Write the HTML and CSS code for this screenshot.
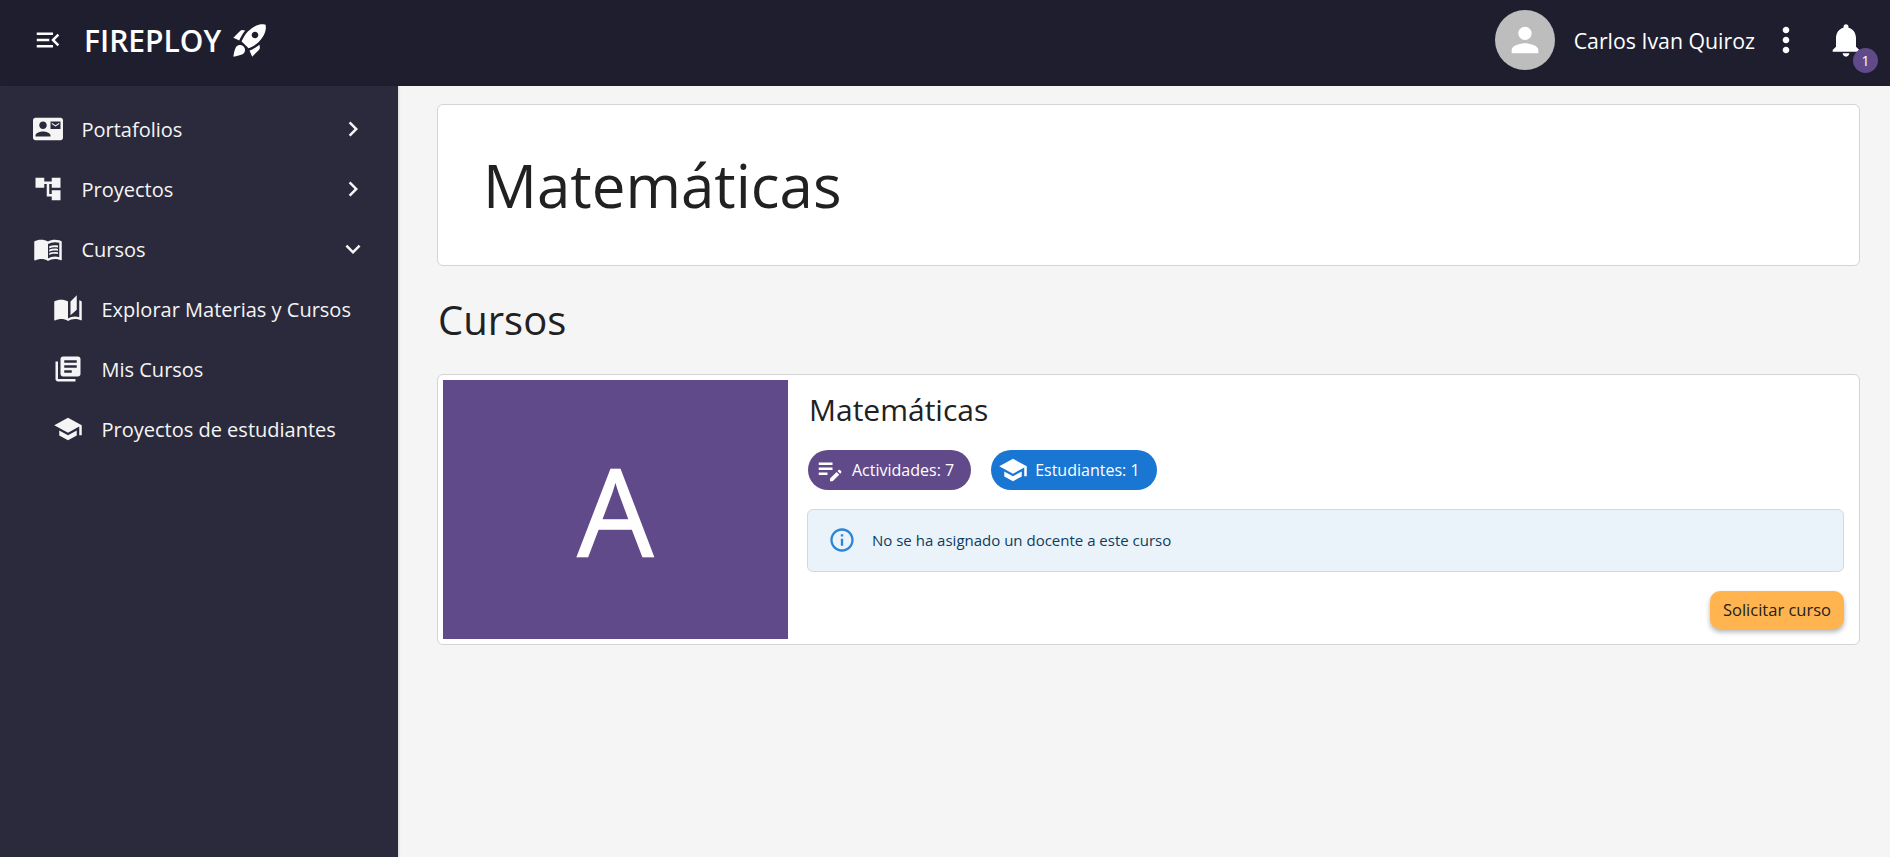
FILE: index.html
```html
<!DOCTYPE html>
<html lang="es">
<head>
  <meta charset="UTF-8" />
  <meta name="viewport" content="width=device-width, initial-scale=1.0"/>
  <title>Fireploy - Matemáticas</title>
  <link rel="stylesheet" href="styles.css">
</head>
<body>
  <header class="topbar">
    <div class="brand">
      <svg class="icon-menu" viewBox="0 0 24 24"><path d="M3 18h13v-2H3v2zm0-5h10v-2H3v2zm0-7v2h13V6H3zm18 9.59L17.42 12 21 8.41 19.59 7l-5 5 5 5L21 15.59z"/></svg>
      <span class="brand-name">FIREPLOY</span>
      <svg class="icon-rocket" viewBox="0 0 24 24"><path d="M9.19 6.35c-2.04 2.29-3.44 5.58-3.57 5.89L2 10.69l4.05-4.05c.47-.47 1.15-.68 1.81-.55l1.33.26zM11.17 17s3.74-1.55 5.89-3.7c5.4-5.4 4.5-9.62 4.21-10.57-.95-.3-5.17-1.19-10.57 4.21C8.55 9.09 7 12.83 7 12.83L11.17 17zm6.48-2.19c-2.29 2.04-5.58 3.44-5.89 3.57L13.31 22l4.05-4.05c.47-.47.68-1.15.55-1.81l-.26-1.33zM9 18c0 .83-.34 1.58-.88 2.12C6.94 21.3 2 22 2 22s.7-4.94 1.88-6.12C4.42 15.34 5.17 15 6 15c1.66 0 3 1.34 3 3zm4-9c0-1.1.9-2 2-2s2 .9 2 2-.9 2-2 2-2-.9-2-2z"/></svg>
    </div>
    <div class="user-area">
      <div class="avatar">
        <svg viewBox="0 0 24 24"><path d="M12 12c2.21 0 4-1.79 4-4s-1.79-4-4-4-4 1.79-4 4 1.79 4 4 4zm0 2c-2.67 0-8 1.34-8 4v2h16v-2c0-2.66-5.33-4-8-4z"/></svg>
      </div>
      <span class="user-name">Carlos Ivan Quiroz</span>
      <svg class="icon-top" viewBox="0 0 24 24"><path d="M12 8c1.1 0 2-.9 2-2s-.9-2-2-2-2 .9-2 2 .9 2 2 2zm0 2c-1.1 0-2 .9-2 2s.9 2 2 2 2-.9 2-2-.9-2-2-2zm0 6c-1.1 0-2 .9-2 2s.9 2 2 2 2-.9 2-2-.9-2-2-2z"/></svg>
      <div class="bell">
        <svg class="icon-top" viewBox="0 0 24 24"><path d="M12 22c1.1 0 2-.9 2-2h-4c0 1.1.89 2 2 2zm6-6v-5c0-3.07-1.64-5.64-4.5-6.32V4c0-.83-.67-1.5-1.5-1.5s-1.5.67-1.5 1.5v.68C7.63 5.36 6 7.92 6 11v5l-2 2v1h16v-1l-2-2z"/></svg>
        <span class="badge">1</span>
      </div>
    </div>
  </header>

  <div class="layout">
    <nav class="sidebar">
      <a class="nav-item">
        <svg class="nav-icon" viewBox="0 0 24 24"><path d="M21 8V7l-3 2-3-2v1l3 2 3-2zm1-5H2C.9 3 0 3.9 0 5v14c0 1.1.9 2 2 2h20c1.1 0 1.99-.9 1.99-2L24 5c0-1.1-.9-2-2-2zM8 6c1.66 0 3 1.34 3 3s-1.34 3-3 3-3-1.34-3-3 1.34-3 3-3zm6 12H2v-1c0-2 4-3.1 6-3.1s6 1.1 6 3.1v1zm8-6h-8V6h8v6z"/></svg>
        <span class="nav-label">Portafolios</span>
        <svg class="nav-icon" viewBox="0 0 24 24"><path d="M10 6 8.59 7.41 13.17 12l-4.58 4.59L10 18l6-6z"/></svg>
      </a>
      <a class="nav-item">
        <svg class="nav-icon" viewBox="0 0 24 24"><path d="M22 11V3h-7v3H9V3H2v8h7V8h2v10h4v3h7v-8h-7v3h-2V8h2v3z"/></svg>
        <span class="nav-label">Proyectos</span>
        <svg class="nav-icon" viewBox="0 0 24 24"><path d="M10 6 8.59 7.41 13.17 12l-4.58 4.59L10 18l6-6z"/></svg>
      </a>
      <a class="nav-item">
        <svg class="nav-icon" viewBox="0 0 24 24"><path d="M21 5c-1.11-.35-2.33-.5-3.5-.5-1.95 0-4.05.4-5.5 1.5-1.45-1.1-3.55-1.5-5.5-1.5S2.45 4.9 1 6v14.65c0 .25.25.5.5.5.1 0 .15-.05.25-.05C3.1 20.45 5.05 20 6.5 20c1.95 0 4.05.4 5.5 1.5 1.35-.85 3.8-1.5 5.5-1.5 1.65 0 3.35.3 4.75 1.05.1.05.15.05.25.05.25 0 .5-.25.5-.5V6c-.6-.45-1.25-.75-2-1zm0 13.5c-1.1-.35-2.3-.5-3.5-.5-1.7 0-4.15.65-5.5 1.5V8c1.35-.85 3.8-1.5 5.5-1.5 1.2 0 2.4.15 3.5.5v11.5z"/><path d="M17.5 10.5c.88 0 1.73.09 2.5.26V9.24c-.79-.15-1.64-.24-2.5-.24-1.7 0-3.24.29-4.5.83v1.66c1.13-.64 2.7-.99 4.5-.99zM13 12.49v1.66c1.13-.64 2.7-.99 4.5-.99.88 0 1.73.09 2.5.26V11.9c-.79-.15-1.64-.24-2.5-.24-1.7 0-3.24.3-4.5.83zM17.5 14.33c-1.7 0-3.24.29-4.5.83v1.66c1.13-.64 2.7-.99 4.5-.99.88 0 1.73.09 2.5.26v-1.52c-.79-.16-1.64-.24-2.5-.24z"/></svg>
        <span class="nav-label">Cursos</span>
        <svg class="nav-icon" viewBox="0 0 24 24"><path d="M16.59 8.59 12 13.17 7.41 8.59 6 10l6 6 6-6z"/></svg>
      </a>
      <a class="nav-item nav-sub">
        <svg class="nav-icon" viewBox="0 0 24 24"><path d="M19 1l-5 5v11l5-4.5V1zM1 6v14.65c0 .25.25.5.5.5.1 0 .15-.05.25-.05C3.1 20.45 5.05 20 6.5 20c1.95 0 4.05.4 5.5 1.5V6c-1.45-1.1-3.55-1.5-5.5-1.5S2.45 4.9 1 6zm22 13.5V6c-.6-.45-1.25-.75-2-1v13.5c-1.1-.35-2.3-.5-3.5-.5-1.7 0-4.15.65-5.5 1.5v2c1.35-.85 3.8-1.5 5.5-1.5 1.65 0 3.35.3 4.75 1.05.1.05.15.05.25.05.25 0 .5-.25.5-.5v-1.1z"/></svg>
        <span class="nav-label">Explorar Materias y Cursos</span>
      </a>
      <a class="nav-item nav-sub">
        <svg class="nav-icon" viewBox="0 0 24 24"><path d="M4 6H2v14c0 1.1.9 2 2 2h14v-2H4V6zm16-4H8c-1.1 0-2 .9-2 2v12c0 1.1.9 2 2 2h12c1.1 0 2-.9 2-2V4c0-1.1-.9-2-2-2zm-1 9H9V9h10v2zm-4 4H9v-2h6v2zm4-8H9V5h10v2z"/></svg>
        <span class="nav-label">Mis Cursos</span>
      </a>
      <a class="nav-item nav-sub">
        <svg class="nav-icon" viewBox="0 0 24 24"><path d="M5 13.18v4L12 21l7-3.82v-4L12 17l-7-3.82zM12 3L1 9l11 6 9-4.91V17h2V9L12 3z"/></svg>
        <span class="nav-label">Proyectos de estudiantes</span>
      </a>
    </nav>

    <main class="content">
      <section class="panel page-title">
        <h1>Matemáticas</h1>
      </section>

      <h2 class="section-title">Cursos</h2>

      <article class="panel course">
        <div class="course-cover">A</div>
        <div class="course-body">
          <h3>Matemáticas</h3>
          <div class="chips">
            <span class="chip chip-purple">
              <svg viewBox="0 0 24 24"><path d="M3 10h11v2H3zm0-2h11V6H3zm0 8h7v-2H3zm15.01-3.13l.71-.71c.39-.39 1.02-.39 1.41 0l.71.71c.39.39.39 1.02 0 1.41l-.71.71-2.12-2.12zm-.71.71l-5.3 5.3V21h2.12l5.3-5.3-2.12-2.12z"/></svg>
              Actividades: 7
            </span>
            <span class="chip chip-blue">
              <svg viewBox="0 0 24 24"><path d="M5 13.18v4L12 21l7-3.82v-4L12 17l-7-3.82zM12 3L1 9l11 6 9-4.91V17h2V9L12 3z"/></svg>
              Estudiantes: 1
            </span>
          </div>
          <div class="alert">
            <svg viewBox="0 0 24 24"><path d="M11 7h2v2h-2zm0 4h2v6h-2zm1-9C6.48 2 2 6.48 2 12s4.48 10 10 10 10-4.48 10-10S17.52 2 12 2zm0 18c-4.41 0-8-3.59-8-8s3.59-8 8-8 8 3.59 8 8-3.59 8-8 8z"/></svg>
            <span>No se ha asignado un docente a este curso</span>
          </div>
          <div class="course-actions">
            <button class="btn-request">Solicitar curso</button>
          </div>
        </div>
      </article>
    </main>
  </div>
</body>
</html>
```

FILE: styles.css
```css
/* Base */
* {
  box-sizing: border-box;
  margin: 0;
  padding: 0;
}

html, body {
  height: 100%;
  overflow: hidden;
}

body {
  font-family: 'Open Sans', sans-serif;
  background-color: #f5f5f5;
  color: #212121;
  display: flex;
  flex-direction: column;
}

svg {
  fill: currentColor;
  flex-shrink: 0;
  display: block;
}

/* Top bar */
.topbar {
  height: 86px;
  flex-shrink: 0;
  background-color: #1e1e2f;
  color: #fff;
  display: flex;
  align-items: center;
  justify-content: space-between;
  padding: 0 10px 6px 33px;
}

.brand {
  display: flex;
  align-items: center;
}

.icon-menu {
  width: 30px;
  height: 30px;
}

.brand-name {
  font-size: 30px;
  font-weight: 600;
  margin-left: 21px;
  margin-right: 9px;
}

.icon-rocket {
  width: 40px;
  height: 40px;
}

.user-area {
  display: flex;
  align-items: center;
}

.avatar {
  width: 60px;
  height: 60px;
  border-radius: 50%;
  background-color: #bdbdbd;
  margin-right: 19px;
  display: flex;
  align-items: center;
  justify-content: center;
}

.avatar svg {
  width: 40px;
  height: 40px;
}

.user-name {
  font-size: 21.3px;
  margin-right: 11px;
}

.icon-top {
  width: 40px;
  height: 40px;
}

.bell {
  position: relative;
  margin-left: 20px;
  margin-right: 14px;
}

.badge {
  position: absolute;
  left: 27px;
  top: 28px;
  width: 25px;
  height: 25px;
  border-radius: 50%;
  background-color: #614a8a;
  font-size: 14px;
  display: flex;
  align-items: center;
  justify-content: center;
}

/* Sidebar */
.layout {
  flex: 1;
  display: flex;
  min-height: 0;
}

.sidebar {
  width: 398px;
  flex-shrink: 0;
  background-color: #2b2a3c;
  color: #f5f5f5;
  padding-top: 13px;
  box-shadow: 1px 0 2px rgba(0, 0, 0, 0.12);
}

.nav-item {
  height: 60px;
  display: flex;
  align-items: center;
  padding: 0 30px 0 33px;
}

.nav-sub {
  padding-left: 53px;
}

.nav-icon {
  width: 30px;
  height: 30px;
}

.nav-label {
  font-size: 20px;
  margin-left: 18.5px;
  flex: 1;
}

/* Content */
.content {
  flex: 1;
  padding: 18px 30px 0 39px;
}

.panel {
  background-color: #fff;
  border: 1px solid #d4d4d4;
  border-radius: 6px;
}

.page-title {
  height: 162px;
  display: flex;
  align-items: center;
  padding-left: 45px;
}

.page-title h1 {
  font-size: 60px;
  font-weight: 400;
}

.section-title {
  font-size: 40px;
  font-weight: 400;
  line-height: 54px;
  margin: 27px 0 27px 1px;
}

/* Course card */
.course {
  height: 271px;
  padding: 5px;
  display: flex;
}

.course-cover {
  width: 345px;
  background-color: #614a8a;
  color: #fff;
  font-size: 120px;
  -webkit-text-stroke: 1.5px #fff;
  display: flex;
  align-items: center;
  justify-content: center;
}

.course-body {
  flex: 1;
  padding-left: 20px;
  padding-right: 10px;
}

.course-body h3 {
  font-size: 30px;
  font-weight: 400;
  line-height: 40px;
  margin: 10px 0 20px 1px;
}

.chips {
  display: flex;
  gap: 20px;
}

.chip {
  height: 40px;
  border-radius: 20px;
  color: #fff;
  font-size: 16px;
  display: flex;
  align-items: center;
  gap: 7px;
  padding: 0 17px 0 7px;
}

.chip svg {
  width: 30px;
  height: 30px;
}

.chip-purple {
  background-color: #614a8a;
}

.chip-blue {
  background-color: #1976d2;
}

.alert {
  height: 63px;
  margin: 19px 0 0 -1px;
  background-color: #ebf3fa;
  border: 1px solid #d4d8dc;
  border-radius: 6px;
  color: #0d3c61;
  font-size: 15px;
  display: flex;
  align-items: center;
  gap: 16px;
  padding: 0 0 1px 20px;
}

.alert svg {
  width: 28px;
  height: 28px;
  color: #2b84d8;
}

.course-actions {
  display: flex;
  justify-content: flex-end;
  margin-top: 19px;
}

.btn-request {
  font-family: 'Open Sans', sans-serif;
  font-size: 16.5px;
  color: #212121;
  height: 38px;
  padding: 0 13px 2px;
  border: none;
  border-radius: 10px;
  background-color: #ffb44f;
  box-shadow: 0 3px 5px rgba(0, 0, 0, 0.3);
}
```
